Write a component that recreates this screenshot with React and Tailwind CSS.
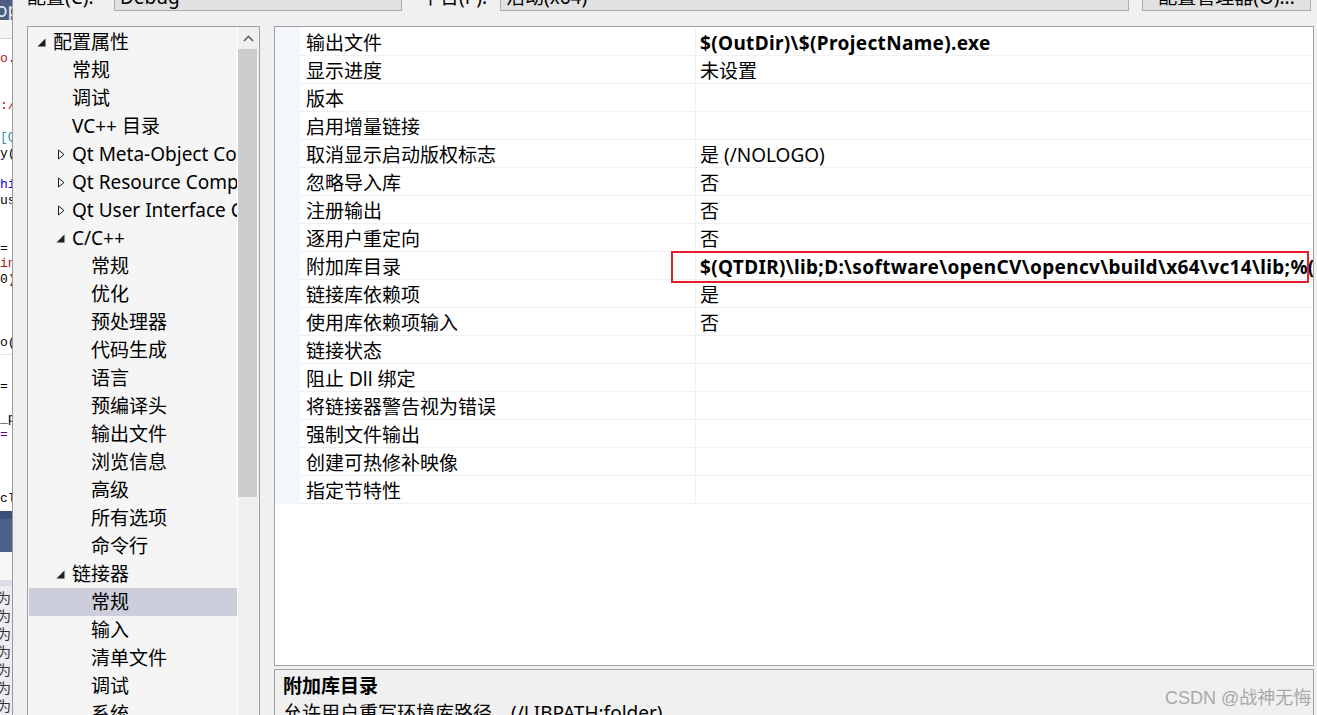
import React from 'react';

const TREE = [
  { label: '配置属性', level: 0, exp: 'open' },
  { label: '常规', level: 1 },
  { label: '调试', level: 1 },
  { label: 'VC++ 目录', level: 1 },
  { label: 'Qt Meta-Object Compiler', level: 1, exp: 'closed' },
  { label: 'Qt Resource Compiler', level: 1, exp: 'closed' },
  { label: 'Qt User Interface Compiler', level: 1, exp: 'closed' },
  { label: 'C/C++', level: 1, exp: 'open' },
  { label: '常规', level: 2 },
  { label: '优化', level: 2 },
  { label: '预处理器', level: 2 },
  { label: '代码生成', level: 2 },
  { label: '语言', level: 2 },
  { label: '预编译头', level: 2 },
  { label: '输出文件', level: 2 },
  { label: '浏览信息', level: 2 },
  { label: '高级', level: 2 },
  { label: '所有选项', level: 2 },
  { label: '命令行', level: 2 },
  { label: '链接器', level: 1, exp: 'open' },
  { label: '常规', level: 2, selected: true },
  { label: '输入', level: 2 },
  { label: '清单文件', level: 2 },
  { label: '调试', level: 2 },
  { label: '系统', level: 2 },
];

const PAD = ['pl-[8px]', 'pl-[27px]', 'pl-[46px]'];

const PROPS = [
  ['输出文件', '$(OutDir)\\$(ProjectName).exe', true],
  ['显示进度', '未设置'],
  ['版本', ''],
  ['启用增量链接', ''],
  ['取消显示启动版权标志', '是 (/NOLOGO)'],
  ['忽略导入库', '否'],
  ['注册输出', '否'],
  ['逐用户重定向', '否'],
  ['附加库目录', '$(QTDIR)\\lib;D:\\software\\openCV\\opencv\\build\\x64\\vc14\\lib;%(AdditionalLibraryDirectories)', true],
  ['链接库依赖项', '是'],
  ['使用库依赖项输入', '否'],
  ['链接状态', ''],
  ['阻止 Dll 绑定', ''],
  ['将链接器警告视为错误', ''],
  ['强制文件输出', ''],
  ['创建可热修补映像', ''],
  ['指定节特性', ''],
];

// code editor peeking out behind the dialog
const CODE_TOP = [
  ['o.h', 'text-[#a31515]'], ['', ''], ['', ''], [':/c', 'text-[#a31515]'], ['', ''],
  ['[QM', 'text-[#2b91af]'], ['y(n', 'text-black'], ['', ''], ['his', 'text-[#0000ff]'],
  ['ush', 'text-black'], ['', ''], ['', ''], ['= c', 'text-black'], ['inp', 'text-[#a31515]'],
  ['0);', 'text-black'], ['', ''], ['', ''], ['', ''], ['o()', 'text-black'],
];
const CODE_BOTTOM = [
  ['', ''], ['= ', 'text-black'], ['', ''], ['_pF', 'text-black'], ['= I', 'text-[#6f008a]'],
  ['', ''], ['', ''], ['', ''], ['cl', 'text-black'],
];

function Tri({ open }) {
  return open ? (
    <svg width="9" height="9" viewBox="0 0 9 9">
      <path d="M8.5 0.5V8.5H0.5Z" fill="#1e1e1e" />
    </svg>
  ) : (
    <svg width="9" height="11" viewBox="0 0 9 11">
      <path d="M1.5 1L7 5.5L1.5 10Z" fill="none" stroke="#1e1e1e" strokeWidth="1" />
    </svg>
  );
}

function CodeStrip() {
  return (
    <div className="w-[13px] shrink-0 h-full flex flex-col border-r border-[#9a9a9a] overflow-hidden font-['Liberation_Mono',monospace] text-[13px] bg-white">
      <div className="h-[20px] bg-[#4b5d80] text-[#e6ebf3] text-[19px] leading-[20px] -indent-[4px] font-['Noto_Sans',sans-serif] whitespace-nowrap">op</div>
      <div className="h-[19px] bg-[#f5f5f5] border-b border-[#d6d6d6]" />
      <div className="h-[12px]" />
      {CODE_TOP.map(([t, c], i) => (
        <div key={i} className={`h-[15.8px] leading-[15.8px] whitespace-nowrap ${c}`}>{t}</div>
      ))}
      <div className="h-[4px] border-b border-[#e3e3e3]" />
      <div className="h-[8px]" />
      {CODE_BOTTOM.map(([t, c], i) => (
        <div key={i} className={`h-[16px] leading-[16px] whitespace-nowrap ${c}`}>{t}</div>
      ))}
      <div className="h-[4px]" />
      <div className="h-[8px] bg-[#3d5077]" />
      <div className="h-[33px] bg-[#4d6189]" />
      <div className="h-[28px] bg-[#f7f7f7]" />
      <div className="h-[6px] bg-[#dcdee6]" />
      <div className="flex-1 bg-[#eeeef2] pt-[2px] font-['Noto_Sans_CJK_SC',sans-serif] text-[14px] text-[#333]">
        {Array.from({ length: 7 }, (_, i) => (
          <div key={i} className="h-[18px] leading-[18px] overflow-hidden -indent-[3px]">为</div>
        ))}
      </div>
    </div>
  );
}

function Tree() {
  return (
    <div className="w-[233px] shrink-0 h-[720px] border border-[#a0a0a0] bg-[#f5f5f5] flex">
      <div className="flex-1 overflow-hidden pt-[1px] pl-[1px]">
        {TREE.map((n, i) => (
          <div
            key={i}
            className={`flex items-center h-[28px] whitespace-nowrap ${PAD[n.level]} ${n.selected ? 'bg-[#cccedb]' : ''}`}
          >
            <span className="w-[16px] shrink-0 flex items-center">
              {n.exp && (n.exp === 'open' ? <Tri open /> : <span className="pl-[1px] flex"><Tri /></span>)}
            </span>
            <span>{n.label}</span>
          </div>
        ))}
      </div>
      <div className="w-[1px] bg-white" />
      <div className="w-[21px] shrink-0 bg-[#f0f0f0] flex flex-col">
        <div className="h-[22px] flex items-center justify-center pr-[1px]">
          <svg width="11" height="7" viewBox="0 0 11 7">
            <path d="M1 6L5.5 1.5L10 6" fill="none" stroke="#606060" strokeWidth="1.6" />
          </svg>
        </div>
        <div className="h-[448px] w-[19px] bg-[#cdcdcd]" />
      </div>
    </div>
  );
}

function PropGrid() {
  return (
    <div className="h-[640px] border border-[#a0a0a0] bg-white flex">
      <div className="w-[25px] shrink-0 self-start h-[477px] bg-[#f3f6fb]" />
      <div className="flex-1 pt-[1px] overflow-hidden">
        {PROPS.map(([name, value, bold], i) => (
          <div key={i} className="flex h-[28px] border-b border-[#f0f0f0]">
            <div className="w-[395px] shrink-0 pl-[6px] pt-[3px] flex items-center whitespace-nowrap">{name}</div>
            <div className="w-[1px] bg-[#f0f0f0]" />
            <div className={`flex-1 pl-[4px] pt-[3px] flex items-center whitespace-nowrap overflow-hidden ${bold ? 'font-bold tracking-[0.35px]' : ''}`}>
              {value}
            </div>
          </div>
        ))}
      </div>
    </div>
  );
}

export default function App() {
  return (
    <div className="w-[1317px] h-[715px] overflow-hidden flex bg-[#f0f0f0] text-black text-[19px] font-['Noto_Sans','Noto_Sans_CJK_SC',sans-serif] relative">
      <CodeStrip />
      <div className="flex-1 flex flex-col">
        <div className="flex items-center h-[28px] -mt-[17px] pl-[14px] shrink-0 whitespace-nowrap">
          <span className="w-[87px]">配置(C):</span>
          <div className="w-[288px] h-full border border-[#adadad] bg-[#e1e1e1] pl-[5px] flex items-center">Debug</div>
          <span className="ml-[19px] w-[79px]">平台(P):</span>
          <div className="w-[629px] h-full border border-[#adadad] bg-[#e1e1e1] pl-[5px] flex items-center">活动(x64)</div>
          <div className="ml-[13px] w-[169px] h-full border border-[#adadad] bg-[#e1e1e1] flex items-center justify-center">
            配置管理器(O)...
          </div>
        </div>
        <div className="flex mt-[15px] pl-[14px] gap-[14px]">
          <Tree />
          <div className="w-[1040px] shrink-0 flex flex-col">
            <PropGrid />
            <div className="mt-[3px] h-[60px] border border-[#a0a0a0] pl-[8px] pt-[3px] leading-[27px]">
              <div className="font-bold">附加库目录</div>
              <div className="whitespace-nowrap">允许用户重写环境库路径。(/LIBPATH:folder)</div>
            </div>
          </div>
        </div>
      </div>
      {/* annotation box around the edited value */}
      <div className="absolute left-[671px] top-[251px] w-[638px] h-[32px] border-2 border-[#e3202b]" />
      <div className="absolute left-[1165px] top-[685px] text-[18px] text-[#a9a9a9] font-['Liberation_Sans','Noto_Sans_CJK_SC',sans-serif] whitespace-nowrap">
        CSDN @战神无悔
      </div>
    </div>
  );
}
